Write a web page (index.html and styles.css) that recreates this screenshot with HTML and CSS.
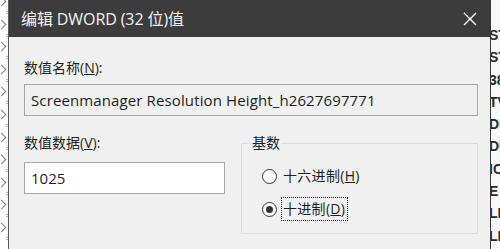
FILE: index.html
```html
<!DOCTYPE html>
<html lang="zh-CN">
<head>
<meta charset="utf-8">
<title>编辑 DWORD (32 位)值</title>
<link rel="stylesheet" href="styles.css">
</head>
<body>
<div class="screen">
  <div class="left-strip">
    <span class="chev"></span><span class="dash"></span>
    <span class="chev"></span><span class="dash"></span>
    <span class="chev"></span><span class="dash"></span>
    <span class="chev"></span><span class="dash"></span>
    <span class="chev"></span><span class="dash"></span>
    <span class="chev"></span><span class="dash"></span>
    <span class="chev"></span><span class="dash"></span>
    <span class="chev"></span><span class="dash"></span>
    <span class="chev"></span><span class="dash"></span>
    <span class="chev"></span><span class="dash"></span>
    <span class="chev"></span><span class="dash"></span>
  </div>
  <div class="dialog">
    <div class="titlebar">
      <span class="title">编辑 DWORD (32 位)值</span>
      <svg class="close" width="14" height="14" viewBox="0 0 14 14"><path d="M1 1 L13 13 M13 1 L1 13" stroke="#ffffff" stroke-width="1.4" fill="none"/></svg>
    </div>
    <div class="content">
      <div class="label first">数值名称(<u>N</u>):</div>
      <div class="textbox readonly">Screenmanager Resolution Height_h2627697771</div>
      <div class="row">
        <div class="col-data">
          <div class="label">数值数据(<u>V</u>):</div>
          <div class="textbox data">1025</div>
        </div>
        <fieldset class="group">
          <legend>基数</legend>
          <div class="radios">
            <div class="radio-row"><span class="radio"></span><span class="rlabel">十六进制(<u>H</u>)</span></div>
            <div class="radio-row"><span class="radio checked"></span><span class="rlabel focus">十进制(<u>D</u>)</span></div>
          </div>
        </fieldset>
      </div>
    </div>
  </div>
  <div class="right-strip">
    <span>ST</span><span>ST</span><span>38</span><span>TV</span><span>DF</span><span>DU</span><span>IC</span><span>E</span><span>LI</span><span>LI</span>
  </div>
</div>
</body>
</html>
```
FILE: styles.css
```css
html, body {
  margin: 0;
  padding: 0;
}
body {
  width: 500px;
  height: 249px;
  overflow: hidden;
  background: #ffffff;
  font-family: "Open Sans", "Noto Sans CJK SC", sans-serif;
}
.screen {
  display: flex;
  width: 500px;
  height: 249px;
  overflow: hidden;
}
.left-strip {
  width: 8px;
  flex: none;
  background: #ffffff;
  display: flex;
  flex-direction: column;
  align-items: flex-start;
  margin-top: -4px;
}
.chev {
  display: block;
  width: 6px;
  height: 6px;
  border-top: 1.6px solid #7e7e7e;
  border-right: 1.6px solid #7e7e7e;
  transform: rotate(45deg);
  margin: 2px 0 2px -2px;
}
.dash {
  display: block;
  width: 2px;
  height: 3px;
  margin: 4px 0 4.6px 6px;
  border-top: 1px solid #b4b4b4;
  border-bottom: 1px solid #b4b4b4;
  box-sizing: border-box;
}
.dialog {
  width: 481px;
  flex: none;
  border-left: 1px solid #5a5a5a;
  border-right: 1px solid #3a3a3a;
  display: flex;
  flex-direction: column;
  background: #f0f0f0;
}
.titlebar {
  height: 37px;
  background: #3c3c3c;
  display: flex;
  align-items: center;
  justify-content: space-between;
  padding: 0 13px 0 12px;
  flex: none;
}
.title {
  color: #f2f2f2;
  font-size: 16px;
  font-family: "Open Sans", "Noto Sans CJK SC", sans-serif;
  letter-spacing: -0.1px;
  margin-top: -1px;
}
.close {
  display: block;
}
.content {
  padding: 21px 12px 0 15px;
  display: flex;
  flex-direction: column;
}
.label {
  font-size: 14px;
  line-height: 20px;
  height: 20px;
  color: #1e1e1e;
}
.textbox {
  box-sizing: border-box;
  height: 32px;
  border: 1px solid #a8a8a8;
  padding: 0 6px;
  font-size: 15px;
  line-height: 30px;
  color: #1e1e1e;
  white-space: nowrap;
  overflow: hidden;
}
.readonly {
  background: #f0f0f0;
  margin-top: 6px;
  letter-spacing: 0.12px;
}
.row {
  display: flex;
  margin-top: 17px;
  gap: 16px;
}
.col-data {
  width: 201px;
  display: flex;
  flex-direction: column;
}
.data {
  background: #ffffff;
  margin-top: 9px;
}
.group {
  margin: 0;
  padding: 0 0 12px 9px;
  width: 237px;
  box-sizing: border-box;
  border: 1px solid #dcdcdc;
  min-width: 0;
}
.group legend {
  padding: 0 1px;
  font-size: 14px;
  line-height: 20px;
  color: #1e1e1e;
}
.radios {
  display: flex;
  flex-direction: column;
  gap: 9px;
  margin-top: 11px;
  padding-left: 11px;
}
.radio-row {
  display: flex;
  align-items: center;
  height: 24px;
}
.radio {
  box-sizing: border-box;
  width: 15px;
  height: 15px;
  border: 1px solid #333333;
  border-radius: 50%;
  background: #ffffff;
  display: flex;
  align-items: center;
  justify-content: center;
  flex: none;
}
.radio.checked::after {
  content: "";
  width: 7px;
  height: 7px;
  border-radius: 50%;
  background: #333333;
}
.rlabel {
  font-size: 14px;
  line-height: 22px;
  color: #1e1e1e;
  margin-left: 4px;
  padding: 0 2px 0 1px;
  border: 1px solid transparent;
  letter-spacing: 0.3px;
}
.rlabel.focus {
  border: 1px dotted #222222;
}
.right-strip {
  flex: 1;
  background: #f8f8f8;
  display: flex;
  flex-direction: column;
  overflow: hidden;
  padding-top: 26px;
}
.right-strip span {
  display: block;
  height: 22.4px;
  line-height: 18px;
  font-size: 14px;
  font-weight: bold;
  color: #2a2a2a;
  font-family: "Liberation Sans", sans-serif;
  margin-left: -2px;
  white-space: nowrap;
}
```
